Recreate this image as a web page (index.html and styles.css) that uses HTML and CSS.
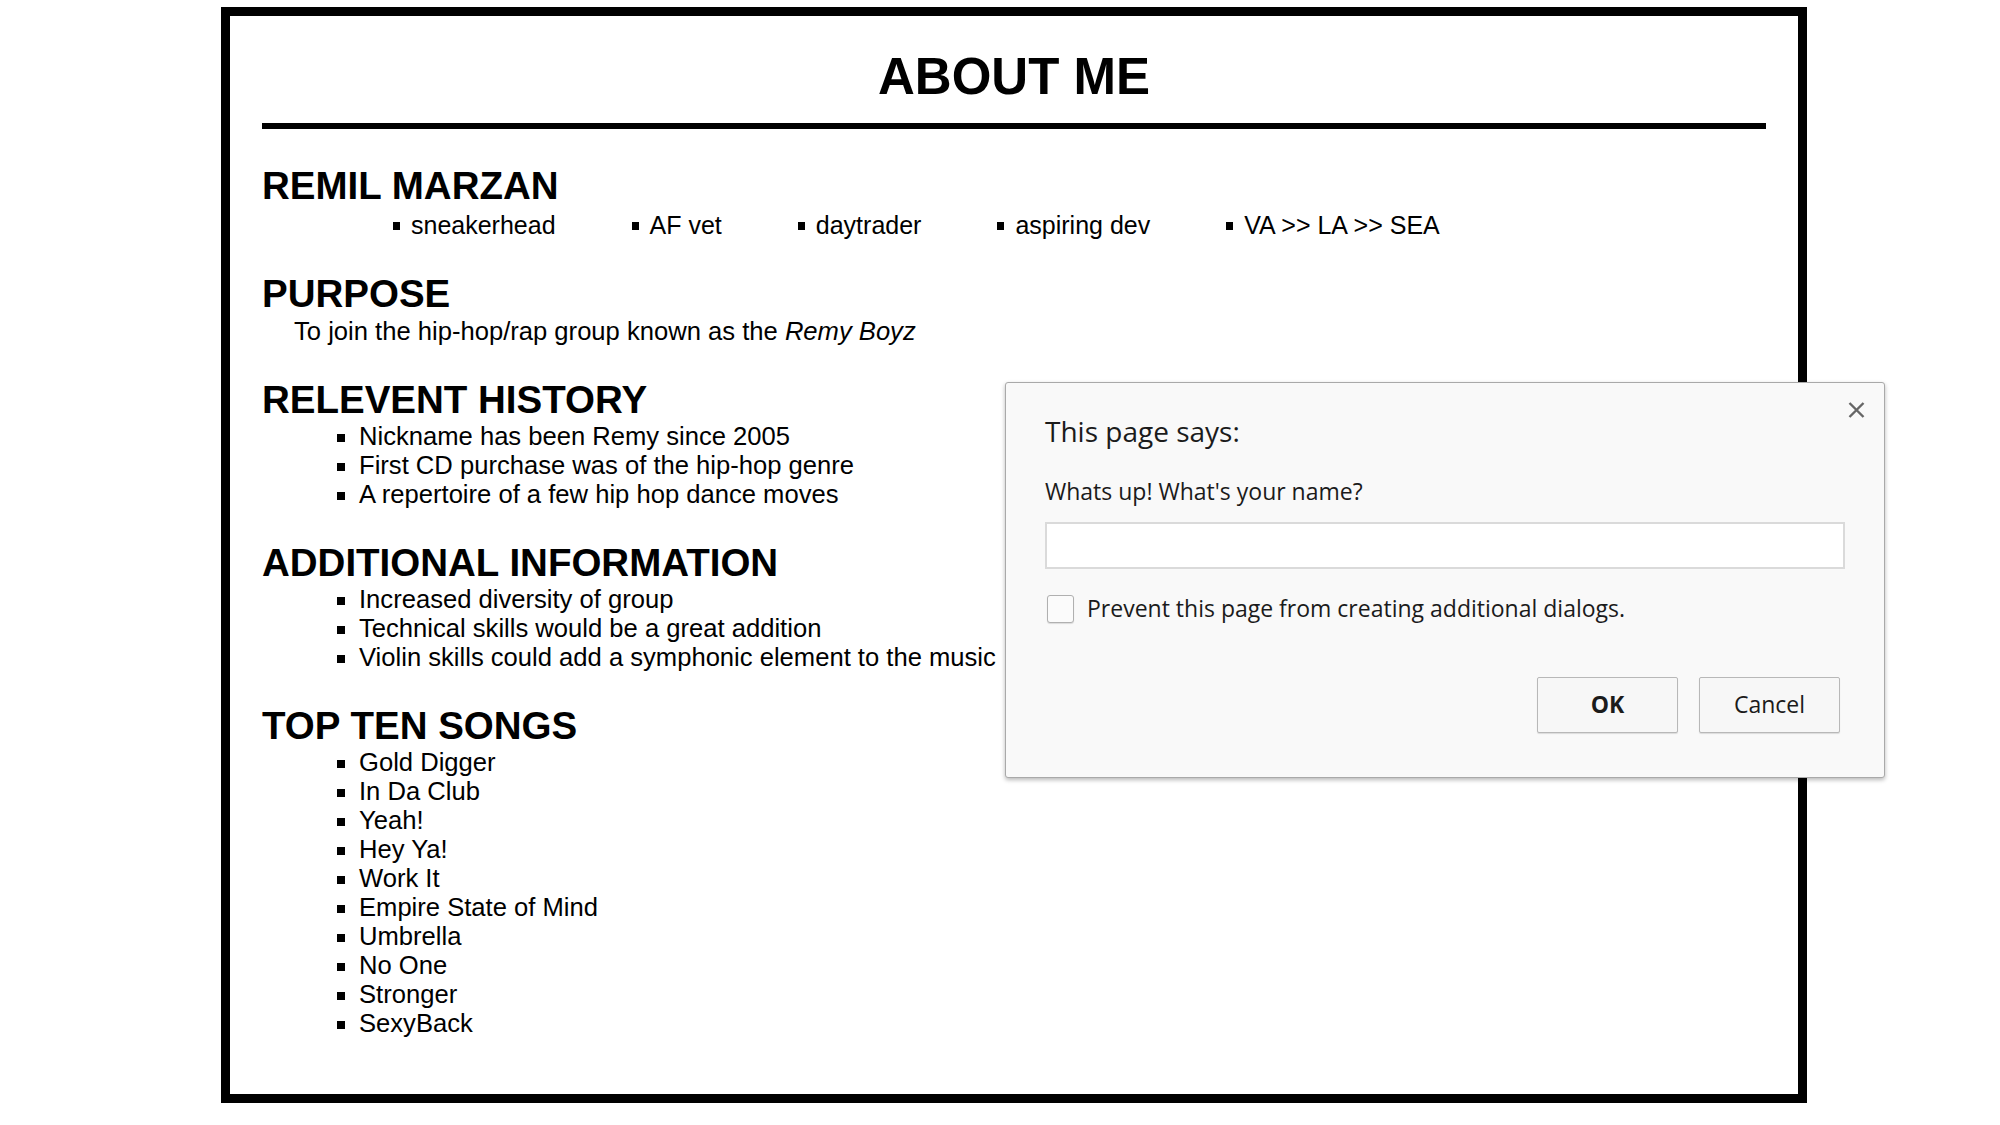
FILE: index.html
```html
<!DOCTYPE html>
<html lang="en">
<head>
    <meta charset="UTF-8">
    <meta name="viewport" content="width=device-width, initial-scale=1.0">
    <title>About Me</title>
    <link rel="stylesheet" href="styles.css">
</head>
<body>
    <div class="container">
        <h1>ABOUT ME</h1>

        <section class="section first">
            <h2>REMIL MARZAN</h2>
            <ul class="tags">
                <li>sneakerhead</li>
                <li>AF vet</li>
                <li>daytrader</li>
                <li>aspiring dev</li>
                <li>VA &gt;&gt; LA &gt;&gt; SEA</li>
            </ul>
        </section>

        <section class="section">
            <h2>PURPOSE</h2>
            <p class="purpose">To join the hip-hop/rap group known as the <em>Remy Boyz</em></p>
        </section>

        <section class="section">
            <h2>RELEVENT HISTORY</h2>
            <ul class="list">
                <li>Nickname has been Remy since 2005</li>
                <li>First CD purchase was of the hip-hop genre</li>
                <li>A repertoire of a few hip hop dance moves</li>
            </ul>
        </section>

        <section class="section">
            <h2>ADDITIONAL INFORMATION</h2>
            <ul class="list">
                <li>Increased diversity of group</li>
                <li>Technical skills would be a great addition</li>
                <li>Violin skills could add a symphonic element to the music</li>
            </ul>
        </section>

        <section class="section">
            <h2>TOP TEN SONGS</h2>
            <ul class="list">
                <li>Gold Digger</li>
                <li>In Da Club</li>
                <li>Yeah!</li>
                <li>Hey Ya!</li>
                <li>Work It</li>
                <li>Empire State of Mind</li>
                <li>Umbrella</li>
                <li>No One</li>
                <li>Stronger</li>
                <li>SexyBack</li>
            </ul>
        </section>
    </div>

    <!-- prompt() dialog as the browser draws it -->
    <div class="dialog">
        <button class="dialog-close" aria-label="Close">
            <svg width="17" height="16" viewBox="0 0 17 16">
                <path d="M1.5 1 L15.5 15 M15.5 1 L1.5 15" stroke="#666" stroke-width="2.4" fill="none"/>
            </svg>
        </button>
        <div class="dialog-title">This page says:</div>
        <div class="dialog-message">Whats up! What's your name?</div>
        <input type="text" class="dialog-input">
        <label class="dialog-check">
            <span class="checkbox"></span>
            Prevent this page from creating additional dialogs.
        </label>
        <div class="dialog-buttons">
            <button class="btn btn-ok">OK</button>
            <button class="btn">Cancel</button>
        </div>
    </div>
</body>
</html>
```

FILE: styles.css
```css
:root {
    --text: #000000;
    --dialog-bg: #f9f9f9;
    --dialog-border: #a9a9a9;
    --dialog-text: #1b1b1b;
    --btn-border: #b8b8b8;
}

body {
    font-family: "Liberation Sans", Arial, sans-serif;
    margin: 0;
    background: #ffffff;
    color: var(--text);
}

.container {
    box-sizing: border-box;
    width: 1586px;
    height: 1096px;
    margin: 7px 0 0 221px;
    padding: 31px 32px;
    border: 9px solid #000;
}

h1 {
    margin: 0;
    padding-bottom: 16px;
    border-bottom: 6px solid #000;
    font-size: 51px;
    line-height: 60px;
    text-align: center;
}

.section {
    margin-top: 33px;
}

.section.first {
    margin-top: 36px;
}

h2 {
    margin: 0;
    font-size: 38.5px;
    line-height: 42px;
}

.tags {
    display: flex;
    gap: 76px;
    list-style: none;
    margin: 4px 0 0;
    padding: 0 0 0 131px;
    font-size: 25px;
    line-height: 29px;
}

.tags li::before {
    content: "";
    display: inline-block;
    width: 7px;
    height: 8px;
    margin-right: 11px;
    background: #000;
    vertical-align: 4px;
}

.purpose {
    margin: 2px 0 0;
    padding-left: 32px;
    font-size: 25.6px;
    line-height: 29px;
}

.list {
    list-style: square;
    margin: 1px 0 0;
    padding-left: 97px;
    font-size: 25.6px;
    line-height: 29px;
}

/* dialog */

.dialog {
    position: absolute;
    left: 1005px;
    top: 382px;
    box-sizing: border-box;
    width: 880px;
    height: 396px;
    padding: 30px 39px 0;
    background: var(--dialog-bg);
    border: 1px solid var(--dialog-border);
    border-radius: 3px;
    box-shadow: 0 2px 4px rgba(0, 0, 0, 0.28);
    font-family: "Open Sans", "Noto Sans", sans-serif;
    color: var(--dialog-text);
}

.dialog-close {
    position: absolute;
    top: 19px;
    right: 19px;
    padding: 0;
    border: none;
    background: none;
    display: flex;
}

.dialog-title {
    font-size: 28px;
    line-height: 36px;
}

.dialog-message {
    margin-top: 27px;
    font-size: 23px;
    line-height: 30px;
}

.dialog-input {
    display: block;
    box-sizing: border-box;
    width: 100%;
    height: 47px;
    margin: 16px 0 0;
    border: 2px solid #dadada;
    background: #fff;
    outline: none;
}

.dialog-check {
    display: flex;
    align-items: center;
    gap: 13px;
    margin-top: 24px;
    padding-left: 2px;
    font-size: 23px;
    line-height: 30px;
}

.dialog-check .checkbox {
    margin-top: 2px;
}

.checkbox {
    box-sizing: border-box;
    width: 27px;
    height: 28px;
    border: 1px solid #b0b0b0;
    border-radius: 3px;
    background: #fbfbfb;
    box-shadow: 0 1px 1px rgba(0, 0, 0, 0.12);
}

.dialog-buttons {
    display: flex;
    justify-content: flex-end;
    gap: 21px;
    margin-top: 54px;
    padding-right: 5px;
}

.btn {
    box-sizing: border-box;
    width: 141px;
    height: 56px;
    padding-bottom: 3px;
    border: 1px solid var(--btn-border);
    border-radius: 2px;
    background: #f7f7f7;
    box-shadow: 0 1px 1px rgba(0, 0, 0, 0.12);
    font-family: inherit;
    font-size: 23px;
    color: var(--dialog-text);
}

.btn-ok {
    font-weight: 700;
}
```
